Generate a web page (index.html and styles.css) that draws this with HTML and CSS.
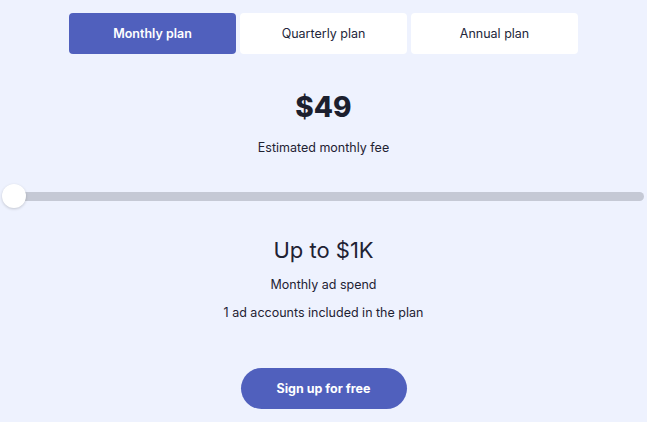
FILE: index.html
```html
<!DOCTYPE html>
<html>
<head>
<meta charset="utf-8">
<link rel="stylesheet" href="styles.css">
</head>
<body>
<div class="page">
  <div class="tabs">
    <div class="tab active">Monthly plan</div>
    <div class="tab">Quarterly plan</div>
    <div class="tab">Annual plan</div>
  </div>
  <div class="price">$49</div>
  <div class="fee">Estimated monthly fee</div>
  <div class="slider">
    <div class="track"></div>
    <div class="thumb"></div>
  </div>
  <div class="spend">Up to $1K</div>
  <div class="label">Monthly ad spend</div>
  <div class="label accounts">1 ad accounts included in the plan</div>
  <button class="cta">Sign up for free</button>
</div>
</body>
</html>
```
FILE: styles.css
```css
html, body {
  margin: 0;
  padding: 0;
  background: #eef2fe;
  font-family: "Inter", "Liberation Sans", sans-serif;
  color: #1f2233;
}
.page {
  width: 647px;
  height: 422px;
  display: flex;
  flex-direction: column;
  align-items: center;
  overflow: hidden;
}
.tabs {
  display: flex;
  gap: 4px;
  margin-top: 13px;
}
.tab {
  width: 167px;
  height: 41px;
  display: flex;
  align-items: center;
  justify-content: center;
  background: #ffffff;
  border-radius: 4px;
  font-size: 12.5px;
  color: #23263a;
}
.tab.active {
  background: #5060bd;
  color: #ffffff;
  font-weight: 600;
}
.price {
  margin-top: 36px;
  font-size: 28px;
  font-weight: 800;
  line-height: 34px;
  color: #1c1f2e;
}
.fee {
  margin-top: 16px;
  font-size: 12.5px;
  line-height: 16px;
}
.slider {
  position: relative;
  width: 647px;
  height: 26px;
  margin-top: 27px;
}
.track {
  position: absolute;
  left: 8px;
  right: 3px;
  top: 9px;
  height: 9px;
  background: #c5c9d5;
  border-radius: 5px;
}
.thumb {
  position: absolute;
  left: 2px;
  top: 1px;
  width: 24px;
  height: 24px;
  border-radius: 50%;
  background: #ffffff;
  box-shadow: 0 1px 3px rgba(0, 0, 0, 0.18);
}
.spend {
  margin-top: 27px;
  font-size: 22px;
  line-height: 28px;
  font-weight: 400;
}
.label {
  margin-top: 13px;
  font-size: 12.5px;
  line-height: 16px;
}
.accounts {
  margin-top: 12px;
}
.cta {
  margin-top: 47px;
  width: 166px;
  height: 41px;
  border: none;
  border-radius: 21px;
  background: #5060bd;
  color: #ffffff;
  font-family: inherit;
  font-size: 12.5px;
  font-weight: 700;
}
```
